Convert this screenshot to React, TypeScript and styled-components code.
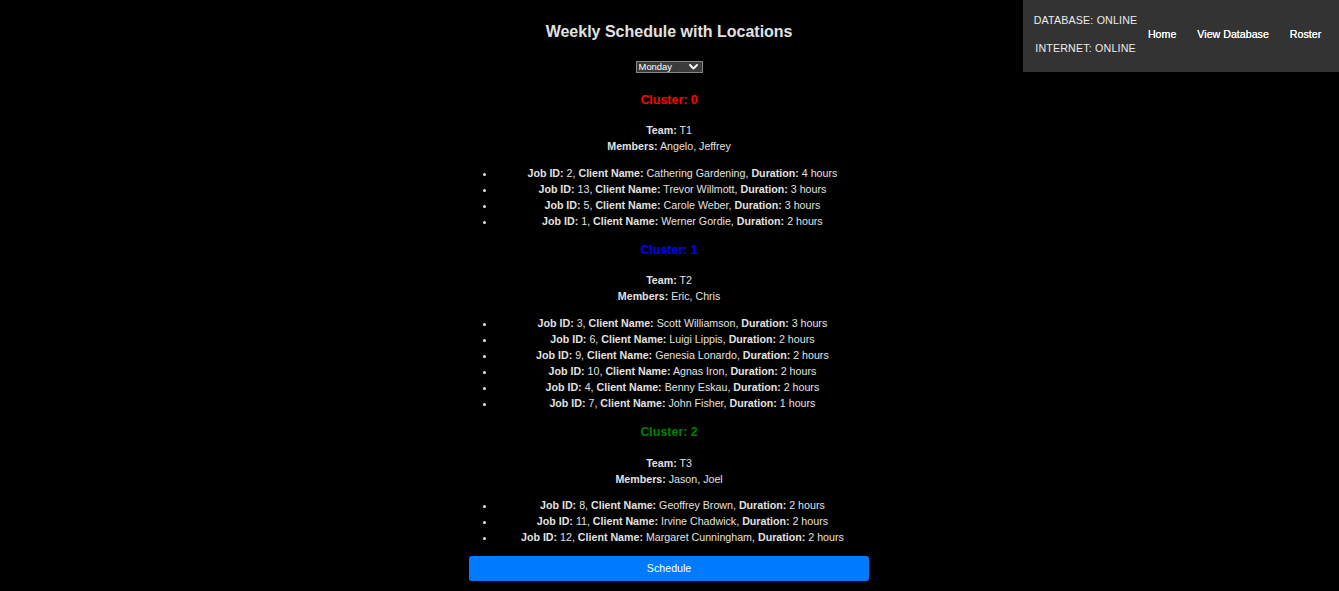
import React from "react";
import styled, { createGlobalStyle } from "styled-components";

const GlobalStyle = createGlobalStyle`
  html, body {
    margin: 0;
    padding: 0;
    background: #000;
  }
  body {
    color: #e2e2e2;
    font-family: "Liberation Sans", Arial, sans-serif;
    font-size: 10.67px;
    line-height: 16px;
  }
`;

const Page = styled.div`
  padding: 6.5px 5.33px 5.33px 4.5px;
  min-height: 591px;
  box-sizing: border-box;
`;

const Main = styled.main`
  width: 400px;
  margin: 0 auto;
  text-align: center;
`;

const Title = styled.h2`
  font-size: 16px;
  line-height: 24px;
  font-weight: bold;
  margin: 13.28px 0;
`;

const SelectRow = styled.div`
  height: 16px;
  margin-bottom: 17.8px;
  display: flex;
  justify-content: center;
  align-items: center;
`;

const SelectWrap = styled.div`
  position: relative;
  width: 67px;
  height: 12px;
  margin-top: 3px;
`;

const DaySelect = styled.select`
  appearance: none;
  -webkit-appearance: none;
  display: block;
  width: 67px;
  height: 12px;
  padding: 0 0 0 2px;
  box-sizing: border-box;
  font-family: "Liberation Sans", Arial, sans-serif;
  font-size: 9.4px;
  line-height: 10px;
  background: #3b3b3b;
  color: #fff;
  border: 1px solid #878787;
  border-radius: 0;
  outline: none;
`;

const Chevron = styled.svg`
  position: absolute;
  right: 5px;
  top: 3.5px;
  width: 9px;
  height: 5.5px;
  pointer-events: none;
`;

const ClusterTitle = styled.h3<{ $color: string }>`
  font-size: 12.45px;
  line-height: 18.67px;
  font-weight: bold;
  margin: 12.48px 0;
  color: ${(p) => p.$color};
`;

const TeamInfo = styled.p`
  margin: 10.67px 0;
`;

const JobList = styled.ul`
  margin: 10.67px 0;
  padding-left: 26.67px;
`;

const Job = styled.li`
  line-height: 16px;
`;

const ScheduleButton = styled.button`
  display: block;
  width: 400px;
  height: 25px;
  margin-top: 10.67px;
  background: #007bff;
  color: #fff;
  border: none;
  border-radius: 2.67px;
  font-family: "Liberation Sans", Arial, sans-serif;
  font-size: 10.67px;
  cursor: pointer;
`;

const NavBar = styled.nav`
  position: absolute;
  top: 0;
  right: 0;
  width: 316px;
  height: 72px;
  box-sizing: border-box;
  padding-bottom: 4px;
  background: #333;
  display: flex;
  align-items: center;
`;

const StatusColumn = styled.div`
  display: flex;
  flex-direction: column;
  align-items: center;
  gap: 12px;
  padding-left: 10.67px;
  color: #ececec;
  letter-spacing: 0.18px;
`;

const NavLinks = styled.div`
  display: flex;
`;

const NavLink = styled.a`
  padding: 0 10.5px;
  color: #fff;
  text-decoration: none;
  text-shadow: 0 0 0.3px #fff;
`;

type JobItem = { id: number; client: string; hours: number };
type Cluster = { id: number; color: string; team: string; members: string; jobs: JobItem[] };

const clusters: Cluster[] = [
  {
    id: 0,
    color: "#ff0000",
    team: "T1",
    members: "Angelo, Jeffrey",
    jobs: [
      { id: 2, client: "Cathering Gardening", hours: 4 },
      { id: 13, client: "Trevor Willmott", hours: 3 },
      { id: 5, client: "Carole Weber", hours: 3 },
      { id: 1, client: "Werner Gordie", hours: 2 },
    ],
  },
  {
    id: 1,
    color: "#0000ff",
    team: "T2",
    members: "Eric, Chris",
    jobs: [
      { id: 3, client: "Scott Williamson", hours: 3 },
      { id: 6, client: "Luigi Lippis", hours: 2 },
      { id: 9, client: "Genesia Lonardo", hours: 2 },
      { id: 10, client: "Agnas Iron", hours: 2 },
      { id: 4, client: "Benny Eskau", hours: 2 },
      { id: 7, client: "John Fisher", hours: 1 },
    ],
  },
  {
    id: 2,
    color: "#008000",
    team: "T3",
    members: "Jason, Joel",
    jobs: [
      { id: 8, client: "Geoffrey Brown", hours: 2 },
      { id: 11, client: "Irvine Chadwick", hours: 2 },
      { id: 12, client: "Margaret Cunningham", hours: 2 },
    ],
  },
];

export default function App() {
  return (
    <>
      <GlobalStyle />
      <Page>
        <Main>
          <Title>Weekly Schedule with Locations</Title>
          <SelectRow>
            <SelectWrap>
              <DaySelect defaultValue="Monday">
                <option>Monday</option>
                <option>Tuesday</option>
                <option>Wednesday</option>
                <option>Thursday</option>
                <option>Friday</option>
              </DaySelect>
              <Chevron viewBox="0 0 9 5.5" fill="none">
                <polyline
                  points="1,1 4.5,4.5 8,1"
                  stroke="#fff"
                  strokeWidth="1.8"
                  strokeLinecap="round"
                  strokeLinejoin="round"
                />
              </Chevron>
            </SelectWrap>
          </SelectRow>
          {clusters.map((c) => (
            <section key={c.id}>
              <ClusterTitle $color={c.color}>Cluster: {c.id}</ClusterTitle>
              <TeamInfo>
                <strong>Team:</strong> {c.team}
                <br />
                <strong>Members:</strong> {c.members}
              </TeamInfo>
              <JobList>
                {c.jobs.map((j) => (
                  <Job key={j.id}>
                    <strong>Job ID:</strong> {j.id}, <strong>Client Name:</strong> {j.client},{" "}
                    <strong>Duration:</strong> {j.hours} hours
                  </Job>
                ))}
              </JobList>
            </section>
          ))}
          <ScheduleButton>Schedule</ScheduleButton>
        </Main>
      </Page>
      <NavBar>
        <StatusColumn>
          <span>DATABASE: ONLINE</span>
          <span>INTERNET: ONLINE</span>
        </StatusColumn>
        <NavLinks>
          <NavLink href="#">Home</NavLink>
          <NavLink href="#">View Database</NavLink>
          <NavLink href="#">Roster</NavLink>
        </NavLinks>
      </NavBar>
    </>
  );
}
